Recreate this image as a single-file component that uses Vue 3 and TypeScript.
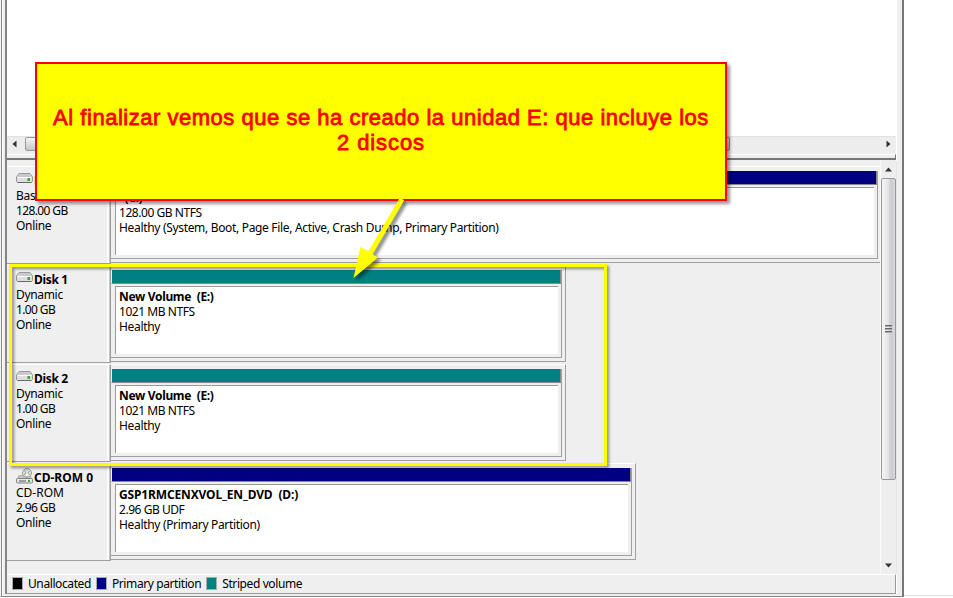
<script setup lang="ts">
interface Disk {
  name: string
  kind: string
  size: string
  volume: string
  detail: string
  status: string
  tone: string
  cd: boolean
  extent: string
}

const disks: Disk[] = [
  { name: 'Disk 0', kind: 'Basic', size: '128.00 GB', volume: '  (C:)', detail: '128.00 GB NTFS', status: 'Healthy (System, Boot, Page File, Active, Crash Dump, Primary Partition)', tone: 'primary', cd: false, extent: 'full' },
  { name: 'Disk 1', kind: 'Dynamic', size: '1.00 GB', volume: 'New Volume  (E:)', detail: '1021 MB NTFS', status: 'Healthy', tone: 'striped', cd: false, extent: 'small' },
  { name: 'Disk 2', kind: 'Dynamic', size: '1.00 GB', volume: 'New Volume  (E:)', detail: '1021 MB NTFS', status: 'Healthy', tone: 'striped', cd: false, extent: 'small' },
  { name: 'CD-ROM 0', kind: 'CD-ROM', size: '2.96 GB', volume: 'GSP1RMCENXVOL_EN_DVD  (D:)', detail: '2.96 GB UDF', status: 'Healthy (Primary Partition)', tone: 'primary', cd: true, extent: 'medium' },
]

const legend = [
  { tone: 'unallocated', label: 'Unallocated' },
  { tone: 'primary', label: 'Primary partition' },
  { tone: 'striped', label: 'Striped volume' },
]
</script>

<template>
  <div class="screen">
    <div class="frame">
      <main class="panes">
        <section class="volumes">
          <div class="list"></div>
          <div class="hscroll">
            <svg class="arrow-left" width="5" height="8" viewBox="0 0 5 8"><path d="M4.500 .5V7.500L.5 4Z" fill="#333" /></svg>
            <div class="hthumb"></div>
            <svg class="arrow-right" width="5" height="8" viewBox="0 0 5 8"><path d="M.5 .5V7.500L4.500 4Z" fill="#333" /></svg>
          </div>
          <div class="list-edge"></div>
        </section>
        <section class="graph">
          <div class="rows">
            <div v-for="disk in disks" :key="disk.name" class="row">
              <div class="info">
                <div class="title">
                  <svg class="icon" width="17" height="16" viewBox="0 0 17 16">
                    <template v-if="disk.cd">
                      <circle cx="11" cy="5" r="4.500" fill="#e4e6e4" stroke="#999" />
                      <path d="M8 2L10 5M14 3L12 5M8 7L10 5" fill="none" stroke="#8ab894" />
                      <path d="M10 2H12V6H14L11 9L8 6H10Z" fill="#fff" stroke="#999" stroke-width=".6" />
                      <path d="M3 7.500H7L11 10L14 8L16.500 12H.5Z" fill="#c5c5c7" stroke="#999" stroke-width=".6" />
                      <rect x=".5" y="10.500" width="16" height="4.500" rx="1" fill="#e6e6e8" stroke="#85858a" />
                      <path d="M3 13H10" stroke="#555" /><path d="M12 13H14" stroke="#39ad3d" stroke-width="2" />
                    </template>
                    <template v-else>
                      <path d="M3 2.500H14L16.500 6V10.500L15.500 11.500H1.500L.5 10.500V6Z" fill="#dedee1" stroke="#98989c" />
                      <path d="M3.500 3H13.500L15 6H2Z" fill="#c9c9cd" />
                      <path d="M1.500 6.500H15.500" stroke="#fff" /><path d="M1.500 11.500H15.500" stroke="#68686d" />
                      <rect x="11.500" y="7" width="2.500" height="3" fill="#39a82c" />
                    </template>
                  </svg>
                  <b :class="{ wide: disk.cd }">{{ disk.name }}</b>
                </div>
                <div :class="disk.cd ? 'kind-cd' : 'kind'">{{ disk.kind }}</div>
                <div class="size">{{ disk.size }}</div>
                <div class="state">Online</div>
              </div>
              <div class="lane" :class="disk.extent">
                <div class="volume">
                  <div class="bar" :class="disk.tone"></div>
                  <div class="body">
                    <b :class="{ wider: disk.cd }">{{ disk.volume }}</b>
                    <div class="detail">{{ disk.detail }}</div>
                    <div class="status">{{ disk.status }}</div>
                  </div>
                </div>
              </div>
            </div>
          </div>
          <div class="vscroll">
            <svg width="7" height="5" viewBox="0 0 7 5"><path d="M0 4.500L3.500 .5L7 4.500Z" fill="#333" /></svg>
            <div class="vthumb"><i></i><i></i><i></i></div>
            <svg class="down" width="7" height="5" viewBox="0 0 7 5"><path d="M0 .5L3.500 4.500L7 .5Z" fill="#333" /></svg>
          </div>
        </section>
        <footer class="legend">
          <div v-for="item in legend" :key="item.tone" class="entry">
            <span class="swatch" :class="item.tone"></span><span class="label">{{ item.label }}</span>
          </div>
        </footer>
      </main>
    </div>
    <div class="blank"></div>
    <div class="highlight"></div>
    <div class="note"><span class="line">Al finalizar vemos que se ha creado la unidad E: que incluye los</span><span class="line second">2 discos</span></div>
    <svg class="pointer" width="70" height="95" viewBox="0 0 70 95">
      <path d="M51 4L17 62" stroke="#ff0" stroke-width="5" />
      <path d="M9.500 52L2.500 83L27 62.500Z" fill="#ff0" />
    </svg>
  </div>
</template>

<style>
body { margin: 0; overflow: hidden; }
</style>

<style scoped>
* { box-sizing: border-box; }
.screen { width: 953px; height: 598px; position: relative; display: flex; background: #fff; overflow: hidden; font: 12px/15px "Noto Sans", "Open Sans", sans-serif; color: #000; }
.frame { width: 904px; height: 597px; display: flex; padding: 0 5px 2px 1px; background: #efefef; border-right: 2px solid #777; border-bottom: 1px solid #888; border-left: 1px solid #f5f5f5; box-shadow: inset 1px 0 #858588, inset 2px 0 #fff; }
.panes { width: 892px; height: 594px; margin-left: 3px; border-left: 2px solid #858588; display: flex; flex-direction: column; border-right: 1px solid #fff; }
.volumes { height: 160px; display: flex; flex-direction: column; background: #efefef; }
.list { height: 136px; background: #fff; }
.hscroll { height: 16px; display: flex; align-items: center; background: #ededed; border-top: 1px solid #e2e2e2; padding-bottom: 2px; }
.arrow-left { margin-left: 5px; }
.hthumb { width: 705px; height: 14px; margin-left: 8px; background: linear-gradient(#f5f5f5, #ddd 50%, #c5c5c9); border: 1px solid #999; border-radius: 2px; }
.arrow-right { margin-left: 156px; }
.list-edge { height: 6px; margin-top: 2px; border-top: 1px solid #fff; border-bottom: 2px solid #777; border-right: 1px solid #777; }
.graph { height: 414px; display: flex; border-top: 1px solid #efefef; }
.rows { width: 873px; padding-top: 5px; background: #efefef; }
.row { height: 99px; display: flex; }
.info { width: 104px; height: 98px; border-top: 1px solid #fff; border-right: 1px solid #a0a0a0; border-bottom: 1px solid #a0a0a0; box-shadow: inset -1px 0 #c8c8c8, inset -3px 0 #fafafa; padding: 5px 0 0 9px; white-space: nowrap; }
.title { display: flex; height: 16px; gap: 1px; }
.icon { flex: none; margin-top: -1px; }
.title b { margin-top: 1px; }
.title .wide { letter-spacing: 0; }
.kind, .state, .status { letter-spacing: -.325px; }
.size { letter-spacing: -.62px; }
.detail { letter-spacing: -.45px; }
.lane { border-top: 1px solid #fff; border-right: 1px solid #a0a0a0; border-bottom: 1px solid #a0a0a0; height: 97px; padding: 4px 3px 3px 0; }
.full { width: 769px; border-right: 0; padding-right: 2px; }
.small { width: 455px; }
.medium { width: 525px; }
.volume { height: 88px; border-right: 1px solid #a0a0a0; border-bottom: 1px solid #a0a0a0; }
.bar { height: 14px; border-bottom: 1px solid #888; border-right: 1px solid #888; border-left: 1px solid #efefef; }
.body { margin: 2px 3px 3px 4px; height: 68px; padding: 2px 0 0 3px; border-top: 1px solid #999; border-left: 1px solid #999; background: #fff; white-space: pre; }
b { display: block; font-weight: 700; letter-spacing: -.33px; }
.body .wider { letter-spacing: -.15px; }
.primary { background-color: #000080; }
.striped { background-color: #008080; }
.unallocated { background-color: #000; }
.vscroll { width: 17px; display: flex; flex-direction: column; align-items: center; padding-top: 6px; background: #eee; border-left: 1px solid #fafafa; border-right: 1px solid #e5e5e5; }
.vthumb { width: 15px; height: 302px; margin-top: 6px; border: 1px solid #999; border-radius: 2px; display: flex; flex-direction: column; justify-content: center; align-items: center; gap: 1px; background: linear-gradient(90deg, #f5f5f5, #e6e6e8 45%, #cacacf 70%, #d9d9dc); }
.vthumb i { width: 7px; height: 2px; background: #666; border-bottom: 1px solid #aaa; }
.down { margin-top: 83px; }
.legend { height: 20px; display: flex; align-items: center; border-top: 1px solid #fff; border-right: 1px solid #999; border-bottom: 1px solid #999; padding: 0 0 1px 5px; gap: 5px; background: #efefef; }
.entry { display: flex; align-items: center; white-space: nowrap; gap: 5px; }
.swatch { width: 11px; height: 13px; border: 1px solid #aaa; }
.label { letter-spacing: -.4px; }
.blank { flex: 1; height: 596px; border-bottom: 1px solid #ddd; }
.highlight { position: absolute; left: 9px; top: 264px; width: 598px; height: 202px; border: 3px solid #ff0; filter: drop-shadow(2px 2px 1.500px rgba(0,0,0,.45)); }
.note { position: absolute; left: 35px; top: 62px; width: 692px; height: 139px; display: flex; flex-direction: column; align-items: center; justify-content: center; padding-bottom: 4px; background: #ff0; border: 2px solid #f00; box-shadow: 3px 3px 3px rgba(0,0,0,.4); color: #f00; font: 22px/25px "Liberation Sans", Arial, sans-serif; letter-spacing: .52px; -webkit-text-stroke: .8px #f00; }
.line { white-space: nowrap; }
.second { letter-spacing: .9px; }
.pointer { position: absolute; left: 351px; top: 195px; filter: drop-shadow(3px 3px 1.500px rgba(0,0,0,.45)); }
</style>
